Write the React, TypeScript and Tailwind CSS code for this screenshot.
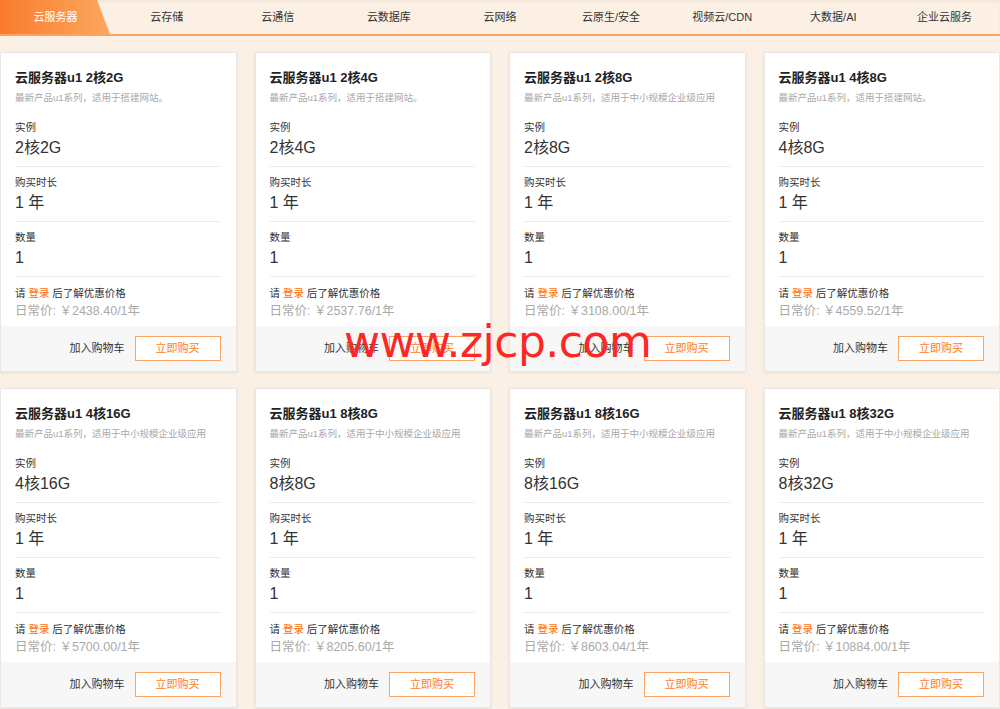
import React from 'react';

const FONT = { fontFamily: '"Liberation Sans", Arial, "Noto Sans CJK SC", sans-serif' };

const tabs = ['云服务器', '云存储', '云通信', '云数据库', '云网络', '云原生/安全', '视频云/CDN', '大数据/AI', '企业云服务'];

const WEBSITE = '最新产品u1系列，适用于搭建网站。';
const SMB = '最新产品u1系列，适用于中小规模企业级应用';

interface Product {
  spec: string;
  desc: string;
  price: string;
}

const products: Product[] = [
  { spec: '2核2G', desc: WEBSITE, price: '2438.40' },
  { spec: '2核4G', desc: WEBSITE, price: '2537.76' },
  { spec: '2核8G', desc: SMB, price: '3108.00' },
  { spec: '4核8G', desc: WEBSITE, price: '4559.52' },
  { spec: '4核16G', desc: SMB, price: '5700.00' },
  { spec: '8核8G', desc: SMB, price: '8205.60' },
  { spec: '8核16G', desc: SMB, price: '8603.04' },
  { spec: '8核32G', desc: SMB, price: '10884.00' },
];

function Field({ label, value }: { label: string; value: string }) {
  return (
    <div className="pt-[7px] pb-[5px] border-b border-[#ececec]">
      <div className="text-[10.5px] leading-4 text-[#333]">{label}</div>
      <div className="text-[16px] leading-[26px] text-[#333]">{value}</div>
    </div>
  );
}

function ProductCard({ p }: { p: Product }) {
  return (
    <div className="bg-white border border-[#e9e6e3] shadow-[0_1px_3px_rgba(0,0,0,0.08)] h-[320px] flex flex-col">
      <div className="pl-[14px] pr-[15px] pt-[15px] flex-1">
        <div className="text-[13px] leading-5 font-bold text-[#222]">云服务器u1 {p.spec}</div>
        <div className="mt-[2px] text-[9.5px] leading-4 text-[#a8a8a8]">{p.desc}</div>
        <div className="mt-[6px]">
          <Field label="实例" value={p.spec} />
          <Field label="购买时长" value="1 年" />
          <Field label="数量" value="1" />
        </div>
        <div className="mt-2 text-[10.5px] leading-4 text-[#333]">
          请 <span className="text-[#ff6a00]">登录</span> 后了解优惠价格
        </div>
        <div className="text-[12.5px] leading-5 text-[#aaa]">日常价: ￥{p.price}/1年</div>
      </div>
      <div className="h-[45px] bg-[#f7f7f7] flex items-center justify-end gap-[10px] pr-[15px]">
        <span className="text-[11px] text-[#333]">加入购物车</span>
        <button className="w-[86px] h-[25px] border border-[#fca462] bg-white text-[11px] text-[#ff7a1a]">立即购买</button>
      </div>
    </div>
  );
}

export default function App() {
  return (
    <div className="relative w-[1000px] h-[709px] overflow-hidden bg-[#fbf0e6]" style={FONT}>
      <div className="grid grid-cols-9 h-[36px] bg-[#fcf0e5] border-b-2 border-[#fba45c] shadow-[inset_0_2px_3px_rgba(0,0,0,0.04)]">
        {tabs.map((t, i) => (
          <div key={t} className="relative flex items-center justify-center text-[11px] text-[#333]">
            {i === 0 && (
              <div className="absolute inset-0 w-[110px] bg-gradient-to-r from-[#f97b2b] to-[#fca75e] [clip-path:polygon(0_0,97px_0,110px_100%,0_100%)]" />
            )}
            <span className={i === 0 ? 'relative text-white' : 'relative'}>{t}</span>
          </div>
        ))}
      </div>

      <div className="grid grid-cols-4 gap-x-[18px] gap-y-[16px] pt-[16px]">
        {products.map((p) => (
          <ProductCard key={p.spec} p={p} />
        ))}
      </div>

      <div
        className="absolute left-[344px] top-[320px] text-[44px] leading-none tracking-[-0.5px] text-[#ff2626] pointer-events-none"
        style={{ fontFamily: '"DejaVu Sans", sans-serif' }}
      >
        www.zjcp.com
      </div>
    </div>
  );
}
